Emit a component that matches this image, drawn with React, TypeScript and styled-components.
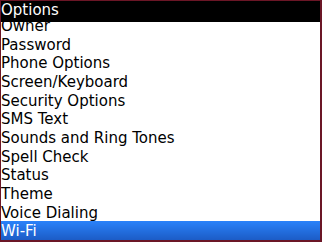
import React from "react";
import styled, { createGlobalStyle } from "styled-components";

const GlobalStyle = createGlobalStyle`
  html, body {
    margin: 0;
    padding: 0;
    background: #ffffff;
  }
`;

const Screen = styled.div`
  width: 322px;
  height: 242px;
  box-sizing: border-box;
  border-style: solid;
  border-color: #6b1626;
  border-width: 1px 2px 2px 1px;
  display: flex;
  flex-direction: column;
  background: #ffffff;
  font-family: "DejaVu Sans", "Liberation Sans", sans-serif;
  font-size: 15px;
  overflow: hidden;
`;

const TitleBar = styled.div`
  flex: 0 0 21px;
  box-sizing: border-box;
  background: #000000;
  color: #ffffff;
  line-height: 18px;
  padding: 0 0 3px 0;
  position: relative;
  z-index: 1;
`;

const List = styled.ul`
  flex: 1;
  margin: 0;
  padding: 0;
  list-style: none;
  display: flex;
  flex-direction: column;
  justify-content: flex-end;
  overflow: hidden;
`;

const Row = styled.li<{ $selected?: boolean }>`
  flex: 0 0 auto;
  box-sizing: border-box;
  height: 18.67px;
  padding-top: 2px;
  line-height: 16.67px;
  white-space: nowrap;
  color: ${({ $selected }) => ($selected ? "#ffffff" : "#000000")};
  background: ${({ $selected }) =>
    $selected ? "linear-gradient(#2a82fa, #1c5cc6)" : "transparent"};
`;

const items = [
  "Owner",
  "Password",
  "Phone Options",
  "Screen/Keyboard",
  "Security Options",
  "SMS Text",
  "Sounds and Ring Tones",
  "Spell Check",
  "Status",
  "Theme",
  "Voice Dialing",
  "Wi-Fi",
];

export default function App() {
  const selected = "Wi-Fi";
  return (
    <>
      <GlobalStyle />
      <Screen>
        <TitleBar>Options</TitleBar>
        <List>
          {items.map((item) => (
            <Row key={item} $selected={item === selected}>
              {item}
            </Row>
          ))}
        </List>
      </Screen>
    </>
  );
}
